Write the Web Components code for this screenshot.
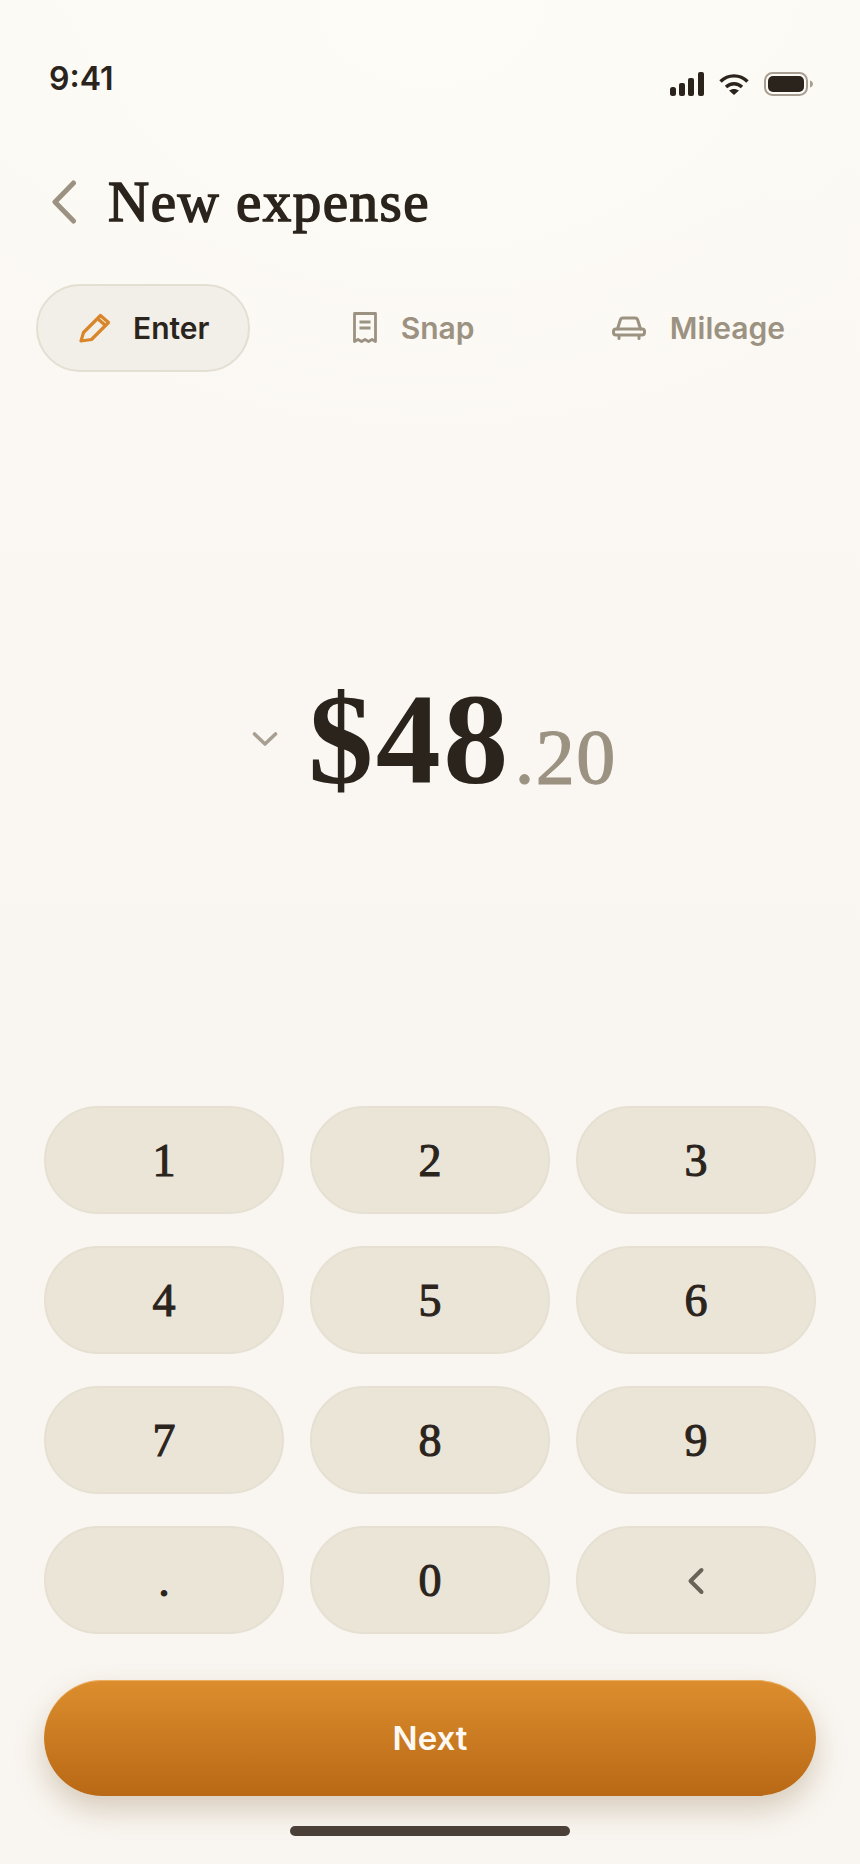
<!DOCTYPE html>
<html lang="en">
<head>
<meta charset="utf-8">
<title>New expense</title>
<style>
  html, body { margin: 0; padding: 0; }
  body { width: 860px; height: 1864px; overflow: hidden; background: #f9f6f1; }
</style>
</head>
<body>
<expense-screen></expense-screen>

<script>
class StatusBar extends HTMLElement {
  constructor() {
    super();
    this.attachShadow({ mode: "open" });
  }

  connectedCallback() {
    this.shadowRoot.innerHTML = `
      <style>
      :host {
        display: flex;
        justify-content: space-between;
        align-items: center;
        height: 48px;
        margin-top: 55px;
        padding: 0 49px;
        color: #2b241d;
        font: 600 32px/48px Inter, "Liberation Sans", sans-serif;
      }
      .icons { display: flex; align-items: center; gap: 15px; margin-right: -2px; margin-top: 10px; }
      svg { display: block; }
      </style>
      <span>9:41</span>
      <div class="icons">
        <svg width="34" height="24" viewBox="0 0 34 24" fill="#2b241d">
          <rect x="0" y="15" width="6" height="9" rx="2.5"/>
          <rect x="9" y="11" width="6" height="13" rx="2"/>
          <rect x="18" y="6" width="6" height="18" rx="2"/>
          <rect x="28" y="0" width="6" height="24" rx="2"/>
        </svg>
        <svg width="30" height="22" viewBox="0 0 30 22" fill="none" stroke="#2b241d" stroke-width="3.4">
          <path d="M1.5 8.5C9 1 21 1 28.5 8.5"/>
          <path d="M7 14C11.5 9.6 18.5 9.6 23 14"/>
          <path d="M15 22l-5-4.4c3-2.2 7-2.2 10 0z" fill="#2b241d" stroke="none"/>
        </svg>
        <svg width="49" height="24" viewBox="0 0 49 24">
          <rect x="1" y="1" width="42" height="22" rx="7.5" fill="none" stroke="#a89f92" stroke-width="2"/>
          <rect x="4" y="4" width="36" height="16" rx="5" fill="#2b241d"/>
          <path d="M46 8.5c2 .6 3 2 3 3.5s-1 2.900-3 3.500z" fill="#a89f92"/>
        </svg>
      </div>
    `;
  }
}

class AppHeader extends HTMLElement {
  constructor() {
    super();
    this.attachShadow({ mode: "open" });
  }

  connectedCallback() {
    this.shadowRoot.innerHTML = `
      <style>
      :host {
        display: flex;
        align-items: center;
        gap: 31px;
        height: 64px;
        margin-top: 67px;
        padding-left: 52px;
      }
      svg { display: block; flex: none; }
      h1 {
        margin: 0;
        color: #2b241d;
        font: 400 57px/64px "Liberation Serif", serif;
        letter-spacing: 1.500px;
        -webkit-text-stroke: 1.500px #2b241d;
      }
      </style>
      <svg width="25" height="44" viewBox="0 0 25 44" fill="none" stroke="#9c9282" stroke-width="5" stroke-linecap="round" stroke-linejoin="round">
        <path d="M21.500 3L3 22l18.500 19"/>
      </svg>
      <h1><slot></slot></h1>
    `;
  }
}

class ModeTab extends HTMLElement {
  static icons = {
    pencil: `<svg width="32" height="30" viewBox="0 0 32 30" fill="none" stroke="currentColor" stroke-width="3.200" stroke-linejoin="round">
      <path d="M2 28l2.500-8.500L21.500 2.500l8 7L12.500 26.500z"/><path d="M18.500 5.500l8 7"/></svg>`,
    receipt: `<svg width="24" height="32" viewBox="0 0 24 32" fill="none" stroke="currentColor" stroke-width="2.800" stroke-linejoin="round">
      <path d="M1.500 1.500h21v28l-3.500-2-3.500 2-3.500-2-3.500 2-3.500-2-3.500 2z"/><path d="M6.500 10h11M6.500 16h11"/></svg>`,
    car: `<svg width="34" height="24" viewBox="0 0 34 24" fill="none" stroke="currentColor" stroke-width="3" stroke-linejoin="round" stroke-linecap="round">
      <path d="M5.500 13l2.800-9c.4-1.300 1.300-2 2.600-2h12.200c1.300 0 2.200.7 2.600 2l2.800 9"/>
      <rect x="1.500" y="13" width="31" height="6" rx="2.500"/><path d="M7 20v2.500M27 20v2.500"/></svg>`
  };

  constructor() {
    super();
    this.attachShadow({ mode: "open" });
  }

  connectedCallback() {
    const active = this.hasAttribute("active");
    this.shadowRoot.innerHTML = `
      <style>
      :host {
        display: flex;
        align-items: center;
        gap: 24px;
        box-sizing: border-box;
        height: 88px;
        padding: 0 39px 0 42px;
        border-radius: 44px;
        font: 600 30px/1 Inter, "Liberation Sans", sans-serif;
        color: #9c9282;
      }
      :host([active]) {
        color: #2b241d;
        background: #f2efe8;
        border: 2px solid #e4dfd3;
        gap: 22px;
        padding: 0 39px 0 41px;
      }
      .icon { display: flex; color: ${active ? "#d9862b" : "#9c9282"}; }
      svg { display: block; }
      </style>
      <span class="icon">${ModeTab.icons[this.getAttribute("icon")]}</span>
      <slot></slot>
    `;
  }
}

class ModeTabs extends HTMLElement {
  constructor() {
    super();
    this.attachShadow({ mode: "open" });
  }

  connectedCallback() {
    this.shadowRoot.innerHTML = `
      <style>
      :host {
        display: flex;
        justify-content: space-between;
        align-items: center;
        margin-top: 50px;
        padding: 0 36px;
      }
      ::slotted([icon="receipt"]) { margin-left: 4px; }
      </style>
      <slot></slot>
    `;
  }
}

class AmountDisplay extends HTMLElement {
  constructor() {
    super();
    this.attachShadow({ mode: "open" });
  }

  connectedCallback() {
    this.shadowRoot.innerHTML = `
      <style>
      :host {
        flex: 1;
        display: flex;
        justify-content: center;
        align-items: center;
        font-family: "Liberation Serif", serif;
      }
      .row { display: flex; align-items: baseline; padding-left: 9px; }
      svg { display: block; flex: none; margin-right: 30px; align-self: center; }
      .whole { color: #2b241d; font-size: 130px; font-weight: 700; line-height: 1; letter-spacing: 2.500px; }
      .cents {
        color: #9c9282;
        font-size: 78px;
        line-height: 1;
        margin-left: 4px;
        letter-spacing: 1.500px;
        -webkit-text-stroke: 1.200px #9c9282;
      }
      </style>
      <div class="row">
        <svg width="26" height="16" viewBox="0 0 26 16" fill="none" stroke="#a89f92" stroke-width="3.600" stroke-linecap="round" stroke-linejoin="round">
          <path d="M2.500 3L13 13 23.500 3"/>
        </svg>
        <span class="whole">$48</span><span class="cents">.20</span>
      </div>
    `;
  }
}

class KeyButton extends HTMLElement {
  constructor() {
    super();
    this.attachShadow({ mode: "open" });
  }

  connectedCallback() {
    this.shadowRoot.innerHTML = `
      <style>
      :host {
        display: flex;
        justify-content: center;
        align-items: center;
        box-sizing: border-box;
        height: 108px;
        padding-top: 2px;
        border-radius: 54px;
        background: #ebe5d8;
        border: 2px solid #e6e0d3;
        color: #2b241d;
        font: 400 46px/1 "Liberation Serif", serif;
        -webkit-text-stroke: 1.100px #2b241d;
      }
      svg { display: block; }
      </style>
      <slot></slot>
    `;
  }
}

class KeyPad extends HTMLElement {
  constructor() {
    super();
    this.attachShadow({ mode: "open" });
  }

  connectedCallback() {
    this.shadowRoot.innerHTML = `
      <style>
      :host {
        display: grid;
        grid-template-columns: repeat(3, 240px);
        grid-auto-rows: 108px;
        column-gap: 26px;
        row-gap: 32px;
        padding: 0 44px;
      }
      </style>
      <slot></slot>
    `;
  }
}

class PrimaryButton extends HTMLElement {
  constructor() {
    super();
    this.attachShadow({ mode: "open" });
  }

  connectedCallback() {
    this.shadowRoot.innerHTML = `
      <style>
      :host {
        display: flex;
        justify-content: center;
        align-items: center;
        height: 116px;
        margin: 46px 44px 0;
        border-radius: 58px;
        background: linear-gradient(180deg, #dc8e2e 0%, #b96815 100%);
        box-shadow: 0 14px 30px rgba(120, 80, 35, 0.26), inset 0 1px 0 rgba(255, 225, 170, 0.4);
        color: #fdf9f2;
        font: 600 33px/1 Inter, "Liberation Sans", sans-serif;
      }
      </style>
      <slot></slot>
    `;
  }
}

class HomeBar extends HTMLElement {
  constructor() {
    super();
    this.attachShadow({ mode: "open" });
  }

  connectedCallback() {
    this.shadowRoot.innerHTML = `
      <style>
      :host {
        display: block;
        width: 280px;
        height: 10px;
        margin: 30px auto 28px;
        border-radius: 5px;
        background: #4a4037;
      }
      </style>
    `;
  }
}

class ExpenseScreen extends HTMLElement {
  constructor() {
    super();
    this.attachShadow({ mode: "open" });
  }

  connectedCallback() {
    const keys = ["1", "2", "3", "4", "5", "6", "7", "8", "9", ".", "0"]
      .map((k) => `<key-button>${k}</key-button>`)
      .join("");

    this.shadowRoot.innerHTML = `
      <style>
      :host {
        display: flex;
        flex-direction: column;
        width: 860px;
        height: 1864px;
        background:
          radial-gradient(ellipse 620px 460px at 50% 0, #fefcf6 0%, rgba(254, 252, 246, 0) 100%),
          linear-gradient(180deg, #fbf9f4 0%, #fbf8f3 25%, #f9f6f1 55%, #f9f6f1 100%);
      }
      </style>
      <status-bar></status-bar>
      <app-header>New expense</app-header>
      <mode-tabs>
        <mode-tab icon="pencil" active>Enter</mode-tab>
        <mode-tab icon="receipt">Snap</mode-tab>
        <mode-tab icon="car">Mileage</mode-tab>
      </mode-tabs>
      <amount-display></amount-display>
      <key-pad>
        ${keys}
        <key-button aria-label="Delete">
          <svg width="18" height="28" viewBox="0 0 18 28" fill="none" stroke="#6b6257" stroke-width="4" stroke-linecap="round" stroke-linejoin="round">
            <path d="M14.500 3L3.500 14l11 11"/>
          </svg>
        </key-button>
      </key-pad>
      <primary-button>Next</primary-button>
      <home-bar></home-bar>
    `;
  }
}

customElements.define("status-bar", StatusBar);
customElements.define("app-header", AppHeader);
customElements.define("mode-tab", ModeTab);
customElements.define("mode-tabs", ModeTabs);
customElements.define("amount-display", AmountDisplay);
customElements.define("key-button", KeyButton);
customElements.define("key-pad", KeyPad);
customElements.define("primary-button", PrimaryButton);
customElements.define("home-bar", HomeBar);
customElements.define("expense-screen", ExpenseScreen);
</script>
</body>
</html>
